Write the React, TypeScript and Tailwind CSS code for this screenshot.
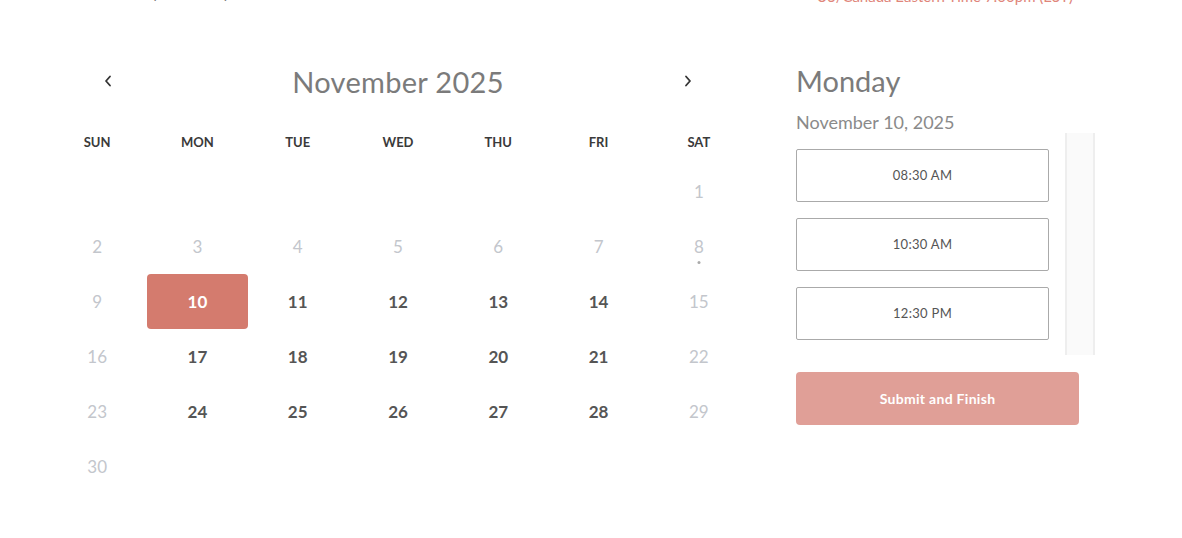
import React from "react";

const days = [
  { n: null }, { n: null }, { n: null }, { n: null }, { n: null }, { n: null }, { n: 1 },
  { n: 2 }, { n: 3 }, { n: 4 }, { n: 5 }, { n: 6 }, { n: 7 }, { n: 8, dot: true },
  { n: 9 }, { n: 10, sel: true }, { n: 11, ok: true }, { n: 12, ok: true }, { n: 13, ok: true }, { n: 14, ok: true }, { n: 15 },
  { n: 16 }, { n: 17, ok: true }, { n: 18, ok: true }, { n: 19, ok: true }, { n: 20, ok: true }, { n: 21, ok: true }, { n: 22 },
  { n: 23 }, { n: 24, ok: true }, { n: 25, ok: true }, { n: 26, ok: true }, { n: 27, ok: true }, { n: 28, ok: true }, { n: 29 },
  { n: 30 },
];

const weekdays = ["SUN", "MON", "TUE", "WED", "THU", "FRI", "SAT"];
const slots = ["08:30 AM", "10:30 AM", "12:30 PM"];

const Chevron = ({ dir }: { dir: "left" | "right" }) => (
  <svg width="10" height="14" viewBox="0 0 10 14" fill="none">
    <path
      d={dir === "left" ? "M7 2.5 L3 7 L7 11.5" : "M3 2.5 L7 7 L3 11.5"}
      stroke="#333"
      strokeWidth="1.8"
      strokeLinecap="round"
      strokeLinejoin="round"
    />
  </svg>
);

export default function App() {
  return (
    <div className="w-[1182px] h-[538px] overflow-hidden bg-white font-['Lato','Liberation_Sans',sans-serif]">
      {/* header strip, mostly scrolled off */}
      <div className="flex justify-between items-end h-[24px] -mt-[19px] pl-[64px] pr-[109px]">
        <span className="text-[14px] leading-[20px] text-[#777] mb-[1px]">Choose the day that suits you best</span>
        <span className="text-[15px] leading-[20px] text-[#e0857a] -mb-[1px]">US/Canada Eastern Time 7:00pm (EST)</span>
      </div>

      <div className="flex pl-[47px] pt-[54px]">
        {/* calendar */}
        <div className="w-[702px]">
          <div className="flex items-center justify-between h-[44px] px-[56px]">
            <button className="w-[10px] flex items-center justify-center mt-[-1px]">
              <Chevron dir="left" />
            </button>
            <div className="text-[29px] text-[#7b7b7b] tracking-[0.3px] mt-[2px]">November 2025</div>
            <button className="w-[10px] flex items-center justify-center mt-[-1px]">
              <Chevron dir="right" />
            </button>
          </div>
          <div className="grid grid-cols-7 mt-[27px] h-[26px] items-center">
            {weekdays.map((w) => (
              <div key={w} className="text-center text-[13px] font-bold text-[#3a3a3a]">
                {w}
              </div>
            ))}
          </div>
          <div className="grid grid-cols-7 mt-[8px]">
            {days.map((d, i) => (
              <div key={i} className="h-[55px] relative flex items-center justify-center">
                {d.n !== null && (
                  <div
                    className={
                      d.sel
                        ? "w-full h-full rounded-[4px] bg-[#d47b6e] text-white font-bold text-[17px] flex items-center justify-center"
                        : d.ok
                        ? "text-[17px] font-bold text-[#555]"
                        : "text-[17px] text-[#c3c6cc]"
                    }
                  >
                    {d.n}
                  </div>
                )}
                {d.dot && (
                  <span className="absolute left-1/2 top-[42px] -translate-x-1/2 w-[3px] h-[3px] rounded-full bg-[#aaa]" />
                )}
              </div>
            ))}
          </div>
        </div>

        {/* day panel */}
        <div className="ml-[47px] w-[300px]">
          <div className="text-[29px] text-[#7b7b7b] leading-[40px] mt-[2px]">Monday</div>
          <div className="text-[18px] text-[#8a8a8a] leading-[24px] mt-[9px]">November 10, 2025</div>
          <div className="flex mt-[-1px] h-[222px] gap-[16px]">
            <div className="w-[253px] flex flex-col gap-[16px] pt-[16px]">
              {slots.map((s) => (
                <button
                  key={s}
                  className="h-[53px] w-full border border-[#aaa] rounded-[2px] bg-white text-[13px] text-[#555] tracking-[0.3px]"
                >
                  {s}
                </button>
              ))}
            </div>
            <div className="w-[30px] h-full bg-[#fafafa] border-x-2 border-[#eeeeee]" />
          </div>
          <button className="mt-[17px] w-[283px] h-[53px] rounded-[4px] bg-[#e09f97] text-white text-[14px] font-bold tracking-[0.3px]">
            Submit and Finish
          </button>
        </div>
      </div>
    </div>
  );
}
